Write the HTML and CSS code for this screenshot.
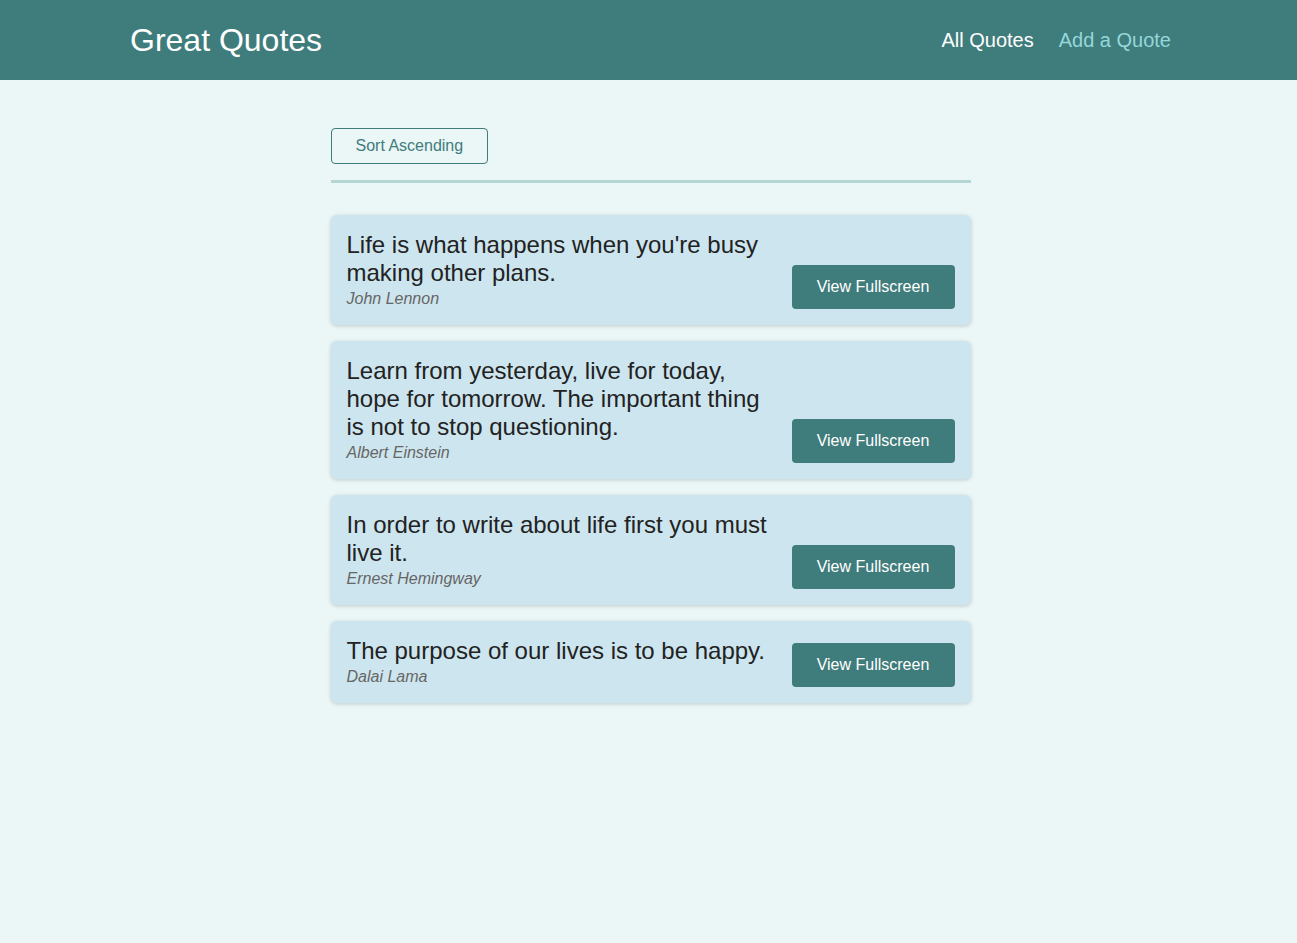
FILE: index.html
```html
<!DOCTYPE html>
<html lang="en">
<head>
<meta charset="utf-8">
<title>Great Quotes</title>
<link rel="stylesheet" href="styles.css">
</head>
<body>
<header class="header">
  <div class="logo">Great Quotes</div>
  <nav class="nav">
    <a class="nav-link active" href="#">All Quotes</a>
    <a class="nav-link" href="#">Add a Quote</a>
  </nav>
</header>
<main class="main">
  <div class="sorting">
    <button class="sort-btn">Sort Ascending</button>
  </div>
  <ul class="list">
    <li class="item">
      <figure class="quote">
        <blockquote class="quote-text">Life is what happens when you're busy making other plans.</blockquote>
        <figcaption class="quote-author">John Lennon</figcaption>
      </figure>
      <a class="btn" href="#">View Fullscreen</a>
    </li>
    <li class="item">
      <figure class="quote">
        <blockquote class="quote-text">Learn from yesterday, live for today, hope for tomorrow. The important thing is not to stop questioning.</blockquote>
        <figcaption class="quote-author">Albert Einstein</figcaption>
      </figure>
      <a class="btn" href="#">View Fullscreen</a>
    </li>
    <li class="item">
      <figure class="quote">
        <blockquote class="quote-text">In order to write about life first you must live it.</blockquote>
        <figcaption class="quote-author">Ernest Hemingway</figcaption>
      </figure>
      <a class="btn" href="#">View Fullscreen</a>
    </li>
    <li class="item">
      <figure class="quote">
        <blockquote class="quote-text">The purpose of our lives is to be happy.</blockquote>
        <figcaption class="quote-author">Dalai Lama</figcaption>
      </figure>
      <a class="btn" href="#">View Fullscreen</a>
    </li>
  </ul>
</main>
</body>
</html>
```

FILE: styles.css
```css
* { box-sizing: border-box; }

html, body {
  margin: 0;
  padding: 0;
}

body {
  font-family: "Liberation Sans", Arial, sans-serif;
  background: #ebf6f7;
  min-height: 943px;
}

.header {
  height: 80px;
  background: #3f7c7c;
  display: flex;
  align-items: center;
  justify-content: space-between;
  padding: 0 126px 0 130px;
}

.logo {
  color: #ffffff;
  font-size: 32px;
  line-height: 1;
}

.nav {
  display: flex;
  gap: 25px;
}

.nav-link {
  font-size: 20px;
  color: #95d7da;
  text-decoration: none;
}

.nav-link.active {
  color: #ffffff;
}

.main {
  width: 640px;
  margin: 48px 0 0 calc(50% - 318px);
}

.sorting {
  padding-bottom: 16px;
  border-bottom: 3px solid #b6d5d5;
}

.sort-btn {
  font-family: "Liberation Sans", Arial, sans-serif;
  font-size: 16px;
  color: #3f7c7c;
  background: transparent;
  border: 1px solid #3f7c7c;
  border-radius: 4px;
  height: 36px;
  padding: 0 24px;
  cursor: pointer;
}

.list {
  list-style: none;
  margin: 32px 0 0;
  padding: 0;
  display: flex;
  flex-direction: column;
  gap: 16px;
}

.item {
  display: flex;
  align-items: flex-end;
  gap: 16px;
  padding: 16px;
  background: #cde5ee;
  border-radius: 6px;
  box-shadow: 0 1px 4px rgba(0, 0, 0, 0.18);
}

.quote {
  flex: 1;
  margin: 0;
}

.quote-text {
  margin: 0;
  font-size: 24px;
  line-height: 28px;
  color: #222222;
}

.quote-author {
  margin-top: 2px;
  font-size: 16px;
  line-height: 20px;
  font-style: italic;
  color: #666666;
}

.btn {
  flex: none;
  display: block;
  width: 163px;
  height: 44px;
  line-height: 44px;
  text-align: center;
  background: #3f7c7c;
  color: #ffffff;
  font-size: 16px;
  text-decoration: none;
  border-radius: 4px;
}
```
